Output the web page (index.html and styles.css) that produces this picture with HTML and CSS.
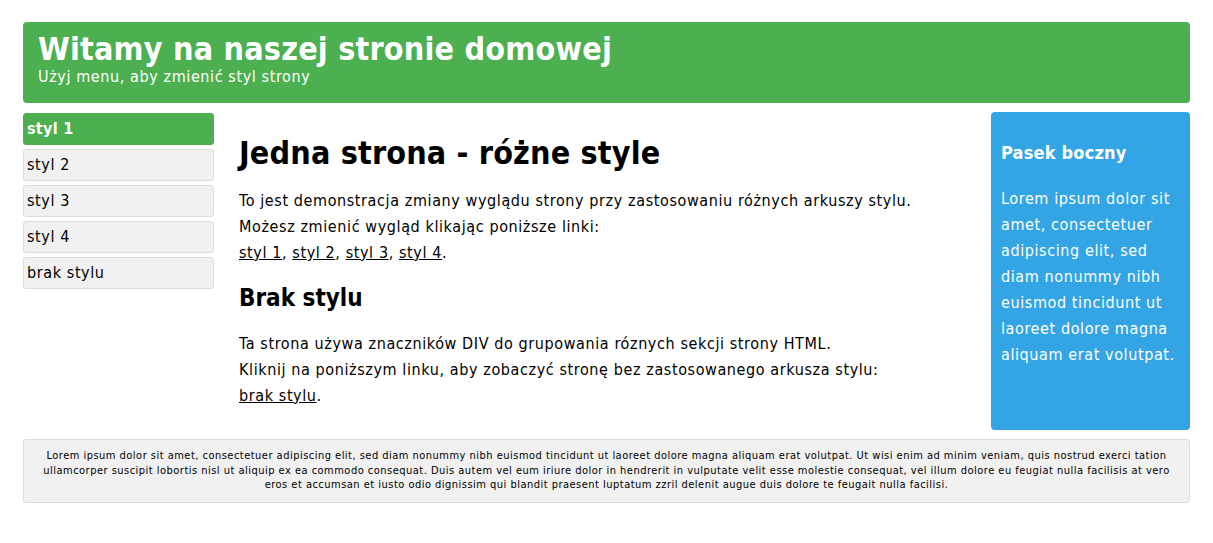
FILE: index.html
```html
<!DOCTYPE html>
<html lang="pl">
<head>
<meta charset="utf-8">
<title>Witamy</title>
<link rel="stylesheet" href="styles.css">
</head>
<body>
<div class="page">
  <header class="header">
    <h1 class="header-title">Witamy na naszej stronie domowej</h1>
    <p class="header-sub">Użyj menu, aby zmienić styl strony</p>
  </header>
  <div class="row">
    <nav class="menu">
      <a class="menu-item active" href="#">styl 1</a>
      <a class="menu-item" href="#">styl 2</a>
      <a class="menu-item" href="#">styl 3</a>
      <a class="menu-item" href="#">styl 4</a>
      <a class="menu-item" href="#">brak stylu</a>
    </nav>
    <main class="main">
      <h1 class="main-title">Jedna strona - różne style</h1>
      <p class="text">To jest demonstracja zmiany wyglądu strony przy zastosowaniu różnych arkuszy stylu.<br>Możesz zmienić wygląd klikając poniższe linki:<br><a href="#">styl 1</a>, <a href="#">styl 2</a>, <a href="#">styl 3</a>, <a href="#">styl 4</a>.</p>
      <h2 class="sub-title">Brak stylu</h2>
      <p class="text text-second">Ta strona używa znaczników DIV do grupowania róznych sekcji strony HTML.<br>Kliknij na poniższym linku, aby zobaczyć stronę bez zastosowanego arkusza stylu:<br><a href="#">brak stylu</a>.</p>
    </main>
    <aside class="aside">
      <h2 class="aside-title">Pasek boczny</h2>
      <p class="aside-text">Lorem ipsum dolor sit amet, consectetuer adipiscing elit, sed diam nonummy nibh euismod tincidunt ut laoreet dolore magna aliquam erat volutpat.</p>
    </aside>
  </div>
  <footer class="footer">
    <p>Lorem ipsum dolor sit amet, consectetuer adipiscing elit, sed diam nonummy nibh euismod tincidunt ut laoreet dolore magna aliquam erat volutpat. Ut wisi enim ad minim veniam, quis nostrud exerci tation ullamcorper suscipit lobortis nisl ut aliquip ex ea commodo consequat. Duis autem vel eum iriure dolor in hendrerit in vulputate velit esse molestie consequat, vel illum dolore eu feugiat nulla facilisis at vero eros et accumsan et iusto odio dignissim qui blandit praesent luptatum zzril delenit augue duis dolore te feugait nulla facilisi.</p>
  </footer>
</div>
</body>
</html>
```
FILE: styles.css
```css
html, body {
  margin: 0;
  padding: 0;
  background: #ffffff;
}
body {
  font-family: "DejaVu Sans Condensed", "DejaVu Sans", sans-serif;
  font-size: 16px;
  letter-spacing: 0.6px;
  color: #000;
}
.page {
  padding: 22px 23px;
}
.header {
  background: #4caf50;
  border-radius: 4px;
  color: #fff;
  padding: 12px 15px 13px;
}
.header-title {
  margin: 0;
  font-size: 32px;
  line-height: 30px;
  font-weight: bold;
  letter-spacing: 0.2px;
}
.header-sub {
  margin: 0;
  font-size: 16px;
  line-height: 26px;
}
.row {
  display: flex;
  margin-top: 9px;
}
.menu {
  width: 191px;
  flex: none;
  display: flex;
  flex-direction: column;
  gap: 4px;
  padding-top: 1px;
}
.menu-item {
  display: block;
  height: 30px;
  line-height: 30px;
  padding: 0 3px;
  background: #f1f1f1;
  border: 1px solid #dddddd;
  border-radius: 3px;
  color: #000;
  text-decoration: none;
}
.menu-item.active {
  background: #4caf50;
  border-color: #4caf50;
  color: #fff;
  font-weight: bold;
  letter-spacing: 0.3px;
}
.main {
  flex: 1;
  padding: 0 25px;
}
.main-title {
  margin: 21px 0 0;
  font-size: 32px;
  line-height: 40px;
  font-weight: bold;
  letter-spacing: 0.15px;
}
.text {
  margin: 15px 0 0;
  line-height: 26px;
}
.text-second {
  margin-top: 18px;
}
.text a {
  color: #000;
}
.sub-title {
  margin: 17px 0 0;
  font-size: 24px;
  line-height: 30px;
  font-weight: bold;
  letter-spacing: 0;
}
.aside {
  width: 199px;
  flex: none;
  background: #33a5e5;
  color: #fff;
  border-radius: 4px;
  padding: 0 10px;
  box-sizing: border-box;
  height: 318px;
}
.aside-title {
  margin: 30px 0 0;
  font-size: 18px;
  line-height: 22px;
  font-weight: bold;
  letter-spacing: 0.2px;
}
.aside-text {
  margin: 22px 0 0;
  line-height: 26px;
}
.footer {
  margin-top: 9px;
  background: #f1f1f1;
  border: 1px solid #dddddd;
  border-radius: 3px;
  padding: 9px 16px;
  text-align: center;
  font-size: 11px;
  line-height: 14.5px;
  letter-spacing: 0.48px;
}
.footer p {
  margin: 0;
}
```
